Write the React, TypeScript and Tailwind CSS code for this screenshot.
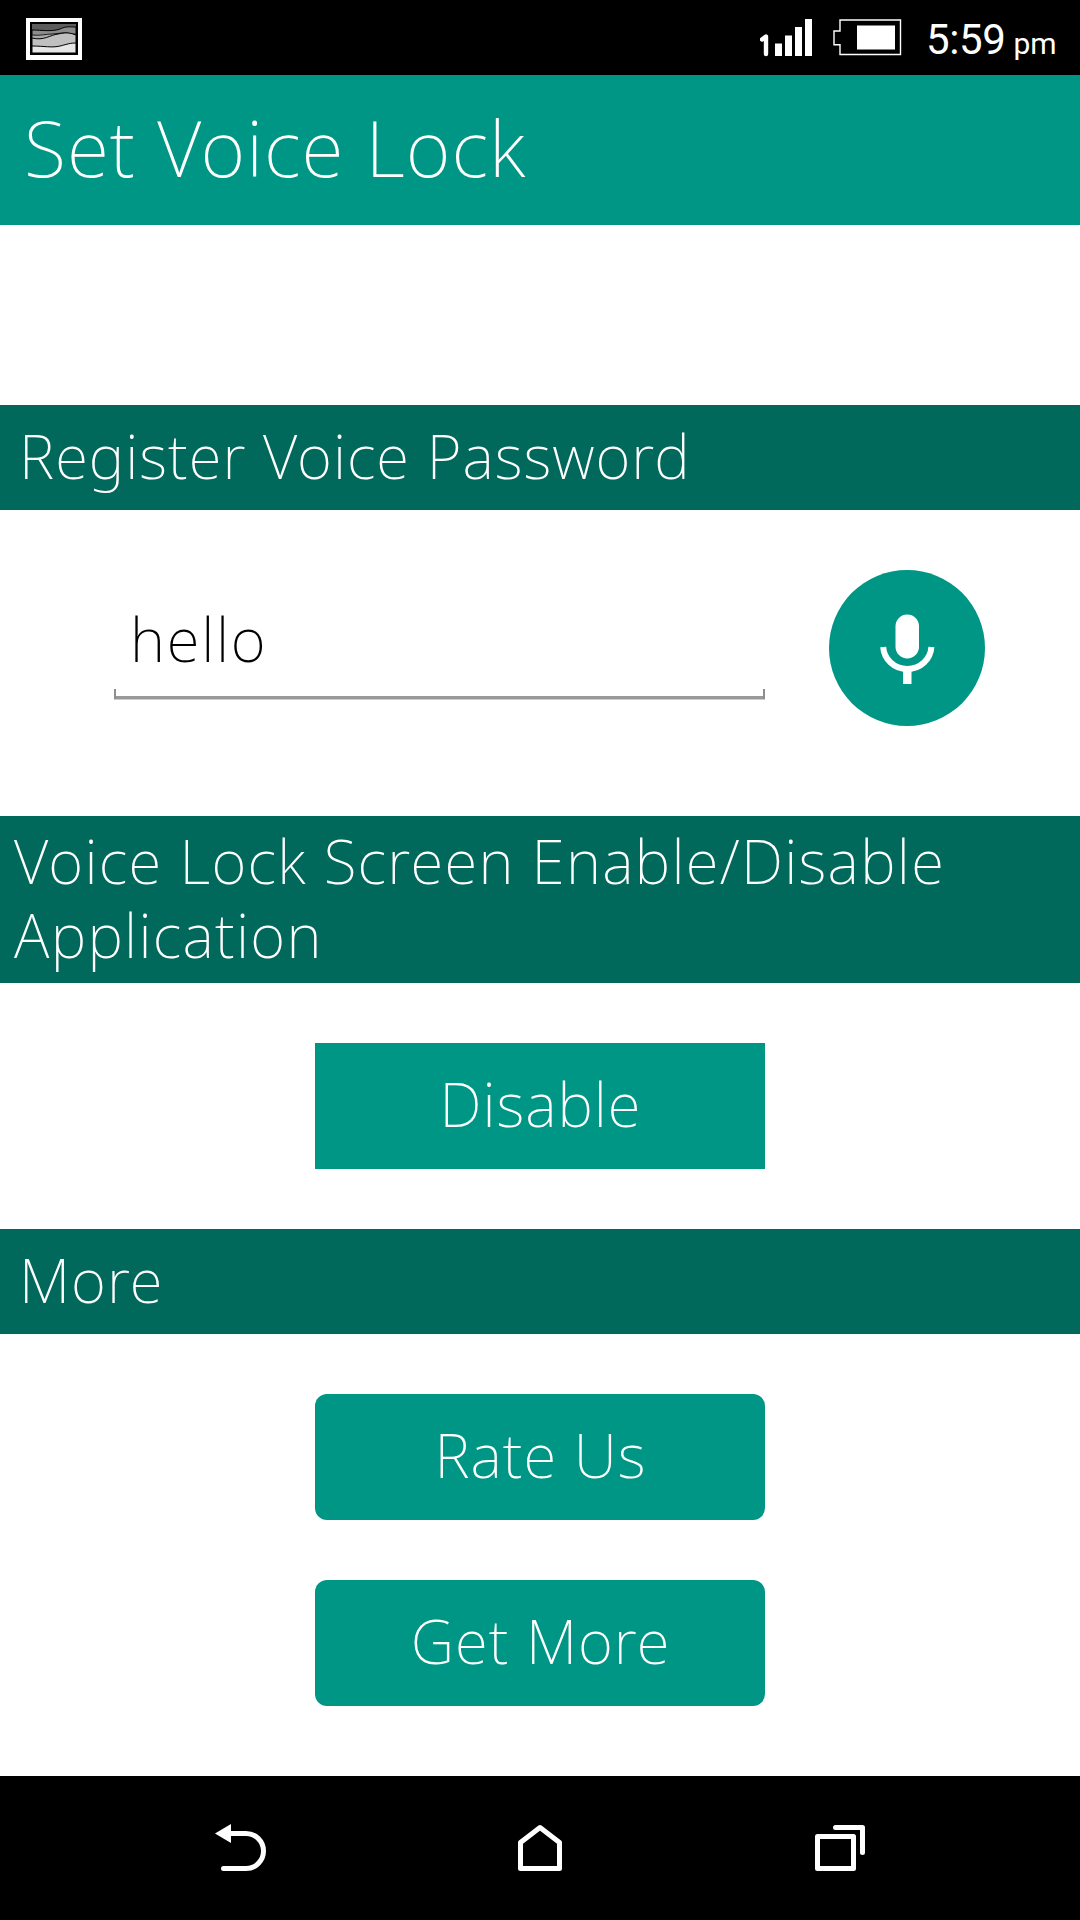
import type { ReactNode } from "react";

const bars = [
  { x: 775, h: 12.5 },
  { x: 785, h: 20.5 },
  { x: 795, h: 29 },
  { x: 805, h: 37 },
];

const StatusBar = () => {
  return (
    <div className="flex h-[75px] items-start bg-black text-white">
      {/* Gallery notification */}
      <svg className="mt-[18px] ml-[26px] h-[42px] w-[56px]" viewBox="0 0 56 42">
        <rect width="56" height="42" fill="#fff" />
        <rect x="4" y="4" width="48" height="33" fill="#000" />
        <rect x="6" y="6" width="44" height="29" fill="#5c5c5c" />
        <path d="M6 12C16 12 26 14 34 11C40 8 44 9 50 9V35H6Z" fill="#8c8c8c" stroke="#000" strokeWidth="1" />
        <path d="M6 17C14 18 20 16 26 16L36 15C42 14 46 17 50 16V35H6Z" fill="#a8a8a8" stroke="#000" strokeWidth="0.8" />
        <path d="M6 20C18 23 24 17 32 16C42 14 44 15 50 17V35H6Z" fill="#c0c0c0" stroke="#000" strokeWidth="1" />
        <path d="M6 28C18 28 26 30 34 28C42 26 44 25 50 25V35H6Z" fill="#e6e6e6" stroke="#000" strokeWidth="1" />
        <rect x="5" y="5" width="46" height="31" fill="none" stroke="#000" strokeWidth="2" />
      </svg>

      {/* Signal */}
      <svg className="ml-[678px] h-[75px] w-[52px]" viewBox="760 0 52 75">
        <path d="M762 39.5L766 36.5V54" fill="none" stroke="#fff" strokeWidth="4.4" strokeLinecap="round" strokeLinejoin="round" />
        {bars.map((bar) => (
          <rect key={bar.x} x={bar.x} y={56 - bar.h} width="7" height={bar.h} fill="#fff" />
        ))}
      </svg>

      {/* Battery */}
      <svg className="ml-[21px] h-[75px] w-[70px]" viewBox="833 0 70 75">
        <path d="M840 20H900.5V54.5H840V44.8H834V31H840Z" fill="none" stroke="#fff" strokeWidth="1.4" />
        <rect x="857" y="25.5" width="38" height="24" fill="#fff" />
      </svg>

      <div className="ml-[23px] flex items-baseline font-[Roboto,sans-serif] font-normal whitespace-nowrap">
        <span className="text-[42px] leading-[79px] tracking-[-0.4px]">5:59</span>
        <span className="ml-[8px] text-[30px]">pm</span>
      </div>
    </div>
  );
};

const SectionTitle = ({ children }: { children: ReactNode }) => {
  return (
    <h2 className="h-[105px] bg-[#00695b] pt-[14px] pl-[19px] text-[60px] leading-[74px] tracking-[1px] text-white">
      {children}
    </h2>
  );
};

const NavBar = () => {
  return (
    <div className="flex h-36 justify-between bg-black pt-[46px] pr-[213px] pl-[215px]">
      {/* Back */}
      <svg className="h-[52px] w-[52px]" viewBox="215 1822 52 52" fill="none" stroke="#fff" strokeWidth="5" strokeLinecap="round">
        <path d="M215 1833.5L231 1824V1843Z" fill="#fff" stroke="none" />
        <path d="M229 1833.5H246A17.5 17.5 0 0 1 246 1868.5H223.5" />
      </svg>
      {/* Home */}
      <svg className="h-[52px] w-[52px]" viewBox="515 1822 52 52" fill="none" stroke="#fff" strokeWidth="5" strokeLinejoin="round">
        <path d="M520.5 1868.5V1842.5L540 1827.5L559.5 1842.5V1868.5Z" />
      </svg>
      {/* Recent apps */}
      <svg className="h-[52px] w-[52px]" viewBox="815 1822 52 52" fill="none" stroke="#fff" strokeWidth="5" strokeLinecap="round" strokeLinejoin="round">
        <rect x="817.5" y="1836.5" width="36" height="32" />
        <path d="M835.5 1827.5H862.5V1852.5" />
      </svg>
    </div>
  );
};

const App = () => {
  return (
    <div className="flex h-[1920px] w-[1080px] flex-col overflow-hidden bg-white font-['Noto_Sans',sans-serif] font-extralight">
      <StatusBar />

      {/* Header */}
      <h1 className="h-[150px] bg-[#009686] pt-[24px] pl-[24px] text-[77px] leading-[98px] tracking-[1px] text-white">
        Set Voice Lock
      </h1>

      <div className="flex flex-1 flex-col pt-[180px]">
        <SectionTitle>Register Voice Password</SectionTitle>

        {/* Voice password */}
        <div className="flex h-[306px] items-start pt-[60px] pl-[114px]">
          <div className="w-[651px]">
            <p className="pt-8 pl-4 text-[60px] leading-[74px] tracking-[1.8px] text-black">hello</p>
            <svg className="mt-[13px] h-[11px] w-[651px]" viewBox="0 0 651 11">
              <rect y="7" width="651" height="3.5" fill="#999" />
              <rect width="2" height="10" fill="#8e8e8e" />
              <rect x="649" width="2" height="10" fill="#8e8e8e" />
            </svg>
          </div>
          <button className="ml-[64px] flex h-[156px] w-[156px] items-center justify-center rounded-full bg-[#009686]">
            <svg className="h-[72px] w-[56px]" viewBox="879 612 56 72" fill="none">
              <rect x="895.5" y="614.5" width="23.5" height="44" rx="11.7" fill="#fff" />
              <path d="M883.2 647C884 659 894 669 907.3 669S930.6 659 931.4 647" stroke="#fff" strokeWidth="6" />
              <path d="M907.3 669V684" stroke="#fff" strokeWidth="8.4" />
            </svg>
          </button>
        </div>

        <h2 className="h-[167px] bg-[#00695b] pt-2 pl-[14px] text-[60px] leading-[74px] tracking-[1.3px] text-white">
          Voice Lock Screen Enable/Disable Application
        </h2>

        <div className="flex h-[246px] justify-center pt-[60px]">
          <button className="h-[126px] w-[450px] bg-[#009686] pb-1 pl-px text-[60px] leading-[74px] tracking-[1px] text-white">
            Disable
          </button>
        </div>

        <SectionTitle>More</SectionTitle>

        {/* Links */}
        <div className="flex flex-col items-center gap-[60px] pt-[60px]">
          <button className="h-[126px] w-[450px] rounded-xl bg-[#009686] pb-1 pl-px text-[60px] leading-[74px] tracking-[1px] text-white">
            Rate Us
          </button>
          <button className="h-[126px] w-[450px] rounded-xl bg-[#009686] pb-1 pl-px text-[60px] leading-[74px] tracking-[1px] text-white">
            Get More
          </button>
        </div>
      </div>

      <NavBar />
    </div>
  );
};

export default App;
